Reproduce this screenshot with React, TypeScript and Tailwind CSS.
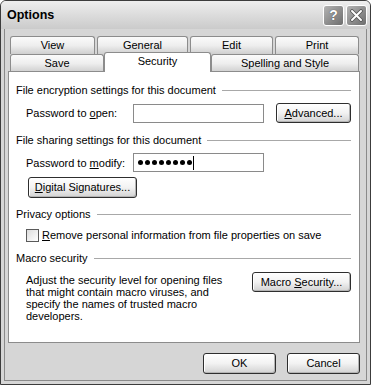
import React from "react";

const font = { fontFamily: '"Liberation Sans", Arial, sans-serif' };

function XPButton({ children, className = "" }: { children: React.ReactNode; className?: string }) {
  return (
    <div
      className={
        "flex items-center justify-center rounded-[3px] border border-[#2e2e2e] bg-gradient-to-b from-[#ffffff] via-[#f2f2f2] to-[#d2d2d2] text-[11px] text-black shadow-[inset_-1px_-1px_0_#b4b4b4,inset_1px_1px_0_#ffffff] " +
        className
      }
    >
      {children}
    </div>
  );
}

function Heading({ text, className = "" }: { text: string; className?: string }) {
  return (
    <div className={"flex h-[14px] items-center " + className}>
      <span className="text-[11px] leading-[14px] text-black whitespace-nowrap">{text}</span>
      <div className="ml-[6px] h-px flex-1 bg-[#a8a8a8]" />
    </div>
  );
}

function Tab({ label, w, selected = false }: { label: string; w: number; selected?: boolean }) {
  const base =
    "flex items-center justify-center border border-b-0 rounded-t-[3px] text-[11px] text-black whitespace-nowrap ";
  if (selected) {
    return (
      <div
        className={base + "relative z-10 -mb-px h-[20px] border-[#8c8c8c] bg-white pb-[3px]"}
        style={{ width: w }}
      >
        {label}
      </div>
    );
  }
  return (
    <div
      className={base + "h-[18px] border-[#8c8c8c] bg-gradient-to-b from-[#fbfbfb] via-[#eeeeee] to-[#cfcfcf]"}
      style={{ width: w }}
    >
      {label}
    </div>
  );
}

export default function App() {
  return (
    <div style={font} className="w-[371px] h-[385px] overflow-hidden bg-white">
      <div className="flex h-[385px] w-[371px] flex-col overflow-hidden rounded-t-[6px] border border-[#3c3c3c] bg-[#d6d6d6]">
        {/* Title bar */}
        <div className="flex h-[28px] items-center bg-gradient-to-b from-[#eeeeee] via-[#dcdcdc] to-[#cbcbcb] pl-[6px] pr-[3px]">
          <span className="text-[12.5px] font-bold text-black">Options</span>
          <div className="ml-auto flex gap-[2px]">
            <div className="flex h-[21px] w-[21px] items-center justify-center rounded-[3px] border border-white bg-gradient-to-br from-[#b4b4b4] to-[#6e6e6e]">
              <span className="text-[14px] font-bold leading-none text-white [text-shadow:0_0_1px_#333]">?</span>
            </div>
            <div className="flex h-[21px] w-[21px] items-center justify-center rounded-[3px] border border-white bg-gradient-to-br from-[#b4b4b4] to-[#6e6e6e]">
              <svg width="13" height="13" viewBox="0 0 13 13">
                <path d="M2 2 L11 11 M11 2 L2 11" stroke="#555" strokeWidth="3.6" strokeLinecap="round" />
                <path d="M2 2 L11 11 M11 2 L2 11" stroke="#fff" strokeWidth="2" strokeLinecap="round" />
              </svg>
            </div>
          </div>
        </div>

        {/* Body */}
        <div className="flex flex-1 flex-col border-x-[3px] border-b-[3px] border-[#d6d6d6] shadow-[inset_1px_0_0_#8a8a8a,inset_-1px_0_0_#8a8a8a,inset_0_-1px_0_#8a8a8a]">
          <div className="flex flex-col pl-[4px] pt-[7px]">
            {/* Tabs row 1 */}
            <div className="flex gap-[2px] pl-[2px]">
              <Tab label="View" w={85} />
              <Tab label="General" w={91} />
              <Tab label="Edit" w={83} />
              <Tab label="Print" w={84} />
            </div>
            {/* Tabs row 2 */}
            <div className="flex h-[17px] items-end pl-[2px]">
              <div className="flex h-[17px]">
                <Tab label="Save" w={94} />
              </div>
              <Tab label="Security" w={107} selected />
              <div className="flex h-[17px]">
                <Tab label="Spelling and Style" w={148} />
              </div>
            </div>
            {/* Panel */}
            <div className="flex h-[272px] w-[352px] flex-col border border-[#8c8c8c] bg-white pl-[7px] pr-[8px] text-[11px] text-black">
              <Heading text="File encryption settings for this document" className="mt-[11px]" />
              <div className="mt-[6px] flex items-center pl-[10px]">
                <span className="w-[107px] leading-[14px]">
                  Password to <span className="underline">o</span>pen:
                </span>
                <div className="h-[19px] w-[131px] border border-[#8a8a8a] bg-white" />
                <XPButton className="ml-[12px] h-[20px] w-[75px]">
                  <span>
                    <span className="underline">A</span>dvanced...
                  </span>
                </XPButton>
              </div>

              <Heading text="File sharing settings for this document" className="mt-[10px]" />
              <div className="mt-[6px] flex items-center pl-[10px]">
                <span className="w-[107px] leading-[14px]">
                  Password to <span className="underline">m</span>odify:
                </span>
                <div className="flex h-[19px] w-[131px] items-center border border-[#8a8a8a] bg-white pl-[4px]">
                  <div className="flex gap-[2px]">
                    {Array.from({ length: 8 }).map((_, i) => (
                      <div key={i} className="h-[5px] w-[5px] rounded-full bg-black" />
                    ))}
                  </div>
                  <div className="ml-[1px] h-[14px] w-px bg-black" />
                </div>
              </div>
              <div className="mt-[5px] pl-[12px]">
                <XPButton className="h-[21px] w-[109px]">
                  <span>
                    <span className="underline">D</span>igital Signatures...
                  </span>
                </XPButton>
              </div>

              <Heading text="Privacy options" className="mt-[9px]" />
              <div className="mt-[7px] flex items-center pl-[10px]">
                <div className="h-[13px] w-[13px] border border-[#5a5a5a] bg-gradient-to-br from-[#dcdcdc] to-[#ffffff]" />
                <span className="ml-[3px] leading-[14px]">
                  <span className="underline">R</span>emove personal information from file properties on save
                </span>
              </div>

              <Heading text="Macro security" className="mt-[9px]" />
              <div className="mt-[7px] flex items-start pl-[10px]">
                <div className="w-[226px] pt-[2px] leading-[12px]">
                  Adjust the security level for opening files
                  <br />
                  that might contain macro viruses, and
                  <br />
                  specify the names of trusted macro
                  <br />
                  developers.
                </div>
                <XPButton className="h-[20px] w-[99px]">
                  <span>
                    Macro <span className="underline">S</span>ecurity...
                  </span>
                </XPButton>
              </div>
            </div>
          </div>

          {/* Footer */}
          <div className="mt-[10px] flex gap-[11px] pl-[199px]">
            <XPButton className="h-[21px] w-[73px]">OK</XPButton>
            <XPButton className="h-[21px] w-[73px]">Cancel</XPButton>
          </div>
        </div>
      </div>
    </div>
  );
}
